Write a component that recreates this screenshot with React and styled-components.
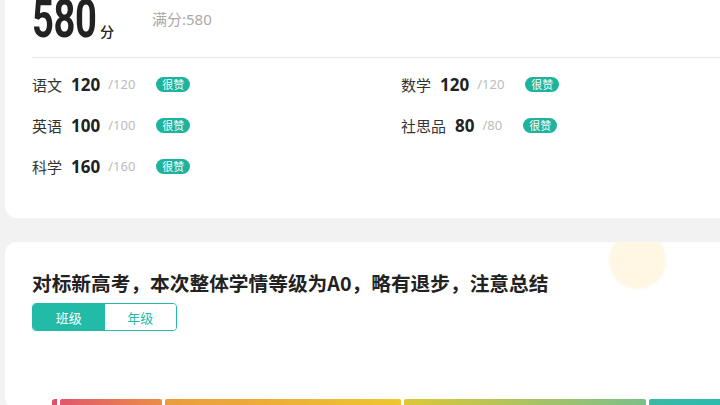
import React from "react";
import styled, { createGlobalStyle } from "styled-components";

const Global = createGlobalStyle`
  html, body { margin: 0; padding: 0; background: #f2f2f2; overflow: hidden; }
  body { font-family: "Noto Sans", "Noto Sans CJK SC", sans-serif; color: #333; }
`;

const Page = styled.div`
  width: 780px;
  padding-left: 5px;
  display: flex;
  flex-direction: column;
  gap: 24px;
`;

const Card = styled.section`
  background: #fff;
  border-radius: 12px;
  position: relative;
  overflow: hidden;
  padding-left: 27px;
`;

const TopCard = styled(Card)`
  margin-top: -19px;
  border-radius: 0 0 12px 12px;
`;

const ScoreHeader = styled.div`
  height: 76px;
  display: flex;
  align-items: center;
`;

const TotalGroup = styled.div`
  display: flex;
  align-items: baseline;
  width: 120px;
`;

const BigNum = styled.span`
  display: inline-block;
  width: 64px;
  font-family: Roboto, "Noto Sans", sans-serif;
  font-weight: 700;
  font-size: 53px;
  line-height: 1;
  color: #222;
  transform: scaleX(0.72);
  transform-origin: left center;
  letter-spacing: -0.5px;
`;

const Unit = styled.span`
  font-family: "Noto Sans CJK SC", sans-serif;
  font-size: 14px;
  font-weight: 500;
  color: #222;
  margin-left: 4px;
`;

const FullMark = styled.span`
  font-size: 15px;
  color: #aaa;
  margin-top: -2px;
`;

const Grid = styled.div`
  border-top: 1px solid #e8e8e8;
  display: grid;
  grid-template-columns: 369px 369px;
  grid-auto-rows: 18px;
  row-gap: 23px;
  padding: 17px 0 43px;
`;

const Row = styled.div`
  display: flex;
  align-items: center;
  height: 18px;
`;

const Label = styled.span`
  font-family: "Noto Sans CJK SC", sans-serif;
  font-size: 15px;
  color: #333;
  margin-right: 9px;
`;

const Score = styled.span`
  font-size: 17px;
  font-weight: 700;
  color: #222;
  margin-right: 8px;
`;

const Total = styled.span`
  font-size: 13px;
  color: #bcbcbc;
  margin-right: 21px;
`;

const Badge = styled.span`
  display: inline-flex;
  align-items: center;
  justify-content: center;
  width: 34px;
  height: 15px;
  border-radius: 8px;
  background: #1db39c;
  color: #fff;
  font-family: "Noto Sans CJK SC", sans-serif;
  font-size: 11px;
`;

const Deco = styled.div`
  position: absolute;
  left: 604px;
  top: -10px;
  width: 57px;
  height: 57px;
  border-radius: 50%;
  background: #fff6e4;
  filter: blur(1px);
`;

const Title = styled.h2`
  margin: 0;
  padding-top: 29px;
  font-family: "Noto Sans CJK SC", sans-serif;
  font-size: 19.7px;
  line-height: 24px;
  font-weight: 700;
  color: #222;
  position: relative;
`;

const Toggle = styled.div`
  margin-top: 8px;
  width: 145px;
  height: 28px;
  box-sizing: border-box;
  border: 1px solid #22bba8;
  border-radius: 4px;
  display: flex;
  overflow: hidden;
`;

const ToggleBtn = styled.div`
  flex: 1;
  display: flex;
  align-items: center;
  justify-content: center;
  font-family: "Noto Sans CJK SC", sans-serif;
  font-size: 13px;
  background: ${(p) => (p.$active ? "#22bba8" : "#fff")};
  color: ${(p) => (p.$active ? "#fff" : "#22bba8")};
`;

const Bar = styled.div`
  margin: 68px 0 0 20px;
  display: flex;
  gap: 3px;
  height: 10px;
`;

const Dot = styled.div`
  width: 5px;
  border-radius: 3px 0 0 3px;
  background: #e0506a;
`;

const Seg = styled.div`
  width: ${(p) => p.$w}px;
  border-radius: 2px 2px 0 0;
  background: linear-gradient(90deg, ${(p) => p.$from}, ${(p) => p.$to});
`;

const subjects = [
  ["语文", 120, 120],
  ["数学", 120, 120],
  ["英语", 100, 100],
  ["社思品", 80, 80],
  ["科学", 160, 160],
];

const segs = [
  { w: 102, from: "#e0576c", to: "#eb8e47" },
  { w: 236, from: "#eb9b3f", to: "#eec62e" },
  { w: 242, from: "#dcc737", to: "#7cbf8a" },
  { w: 120, from: "#3cb8a4", to: "#1fbdb6" },
];

export default function App() {
  return (
    <>
      <Global />
      <Page>
        <TopCard>
          <ScoreHeader>
            <TotalGroup>
              <BigNum>580</BigNum>
              <Unit>分</Unit>
            </TotalGroup>
            <FullMark>满分:580</FullMark>
          </ScoreHeader>
          <Grid>
            {subjects.map(([name, s, t]) => (
              <Row key={name}>
                <Label>{name}</Label>
                <Score>{s}</Score>
                <Total>/{t}</Total>
                <Badge>很赞</Badge>
              </Row>
            ))}
          </Grid>
        </TopCard>
        <Card>
          <Deco />
          <Title>对标新高考，本次整体学情等级为A0，略有退步，注意总结</Title>
          <Toggle>
            <ToggleBtn $active>班级</ToggleBtn>
            <ToggleBtn>年级</ToggleBtn>
          </Toggle>
          <Bar>
            <Dot />
            {segs.map((s, i) => (
              <Seg key={i} $w={s.w} $from={s.from} $to={s.to} />
            ))}
          </Bar>
        </Card>
      </Page>
    </>
  );
}
